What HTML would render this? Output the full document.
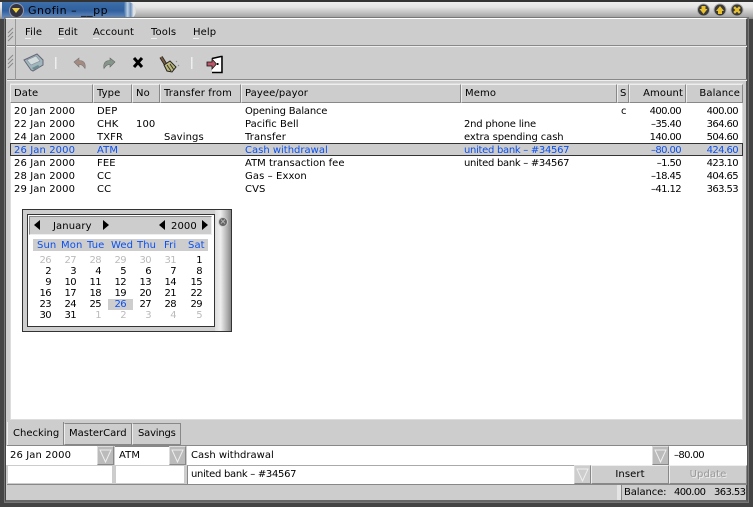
<!DOCTYPE html>
<html><head><meta charset="utf-8"><style>
*{box-sizing:border-box;margin:0;padding:0}
html,body{width:753px;height:507px;overflow:hidden;background:#444}
body{position:relative;font:10px/13px "DejaVu Sans",sans-serif;color:#000;letter-spacing:.1px}
.a{position:absolute;white-space:nowrap}
.r{text-align:right}
.c{text-align:center}
.h{position:absolute;top:84px;height:19px;background:#cdcdcd;border:1px solid;border-color:#eee #888 #888 #eee;line-height:18px;padding:0 3px;white-space:nowrap}
.t{position:absolute;height:13px;line-height:13px;white-space:nowrap;margin-top:1px}
.d{margin:-1px 0 0 -1px}
.b{color:#0a50f0}
.n{letter-spacing:-.6px}
.f{position:absolute;background:#fff;line-height:19px;padding-left:3px;white-space:nowrap}
.dd{position:absolute;width:17px;height:19px;background:#bbb;border:1px solid;border-color:#ddd #888 #888 #ddd}
.m{position:absolute;top:26px;line-height:13px}
.g{color:#bbb}
.tri{position:absolute;width:0;height:0;top:220px;border:5px solid transparent}
.u{position:absolute;top:38px;width:6px;height:1px;background:#eee}
</style></head><body>
<!-- title -->
<div class="a" style="left:0;top:0;width:753px;height:19px;background:linear-gradient(#eee,#e4e4e4 30%,#a8a8a8 85%,#888);border-top:2px solid #333"></div>
<div class="a" style="left:2px;top:2px;width:122px;height:17px;background:linear-gradient(#3f6fa8,#2f5f9e 50%,#6f92c2)"></div>
<div class="a" style="left:124px;top:2px;width:12px;height:17px;background:linear-gradient(90deg,#3f6fa8,#bcd0e4 30%,#6a8db8 55%,#e4e8ec 80%,#d8d8d8);border-radius:0 8px 8px 0"></div>
<div class="a" style="left:9px;top:3px;width:15px;height:15px;border-radius:50%;background:#334;border:1px solid #99a"></div>
<div class="a" style="left:12px;top:8px;width:0;height:0;border:4.500px solid transparent;border-top:5px solid #f0d040;border-bottom:0"></div>
<div class="a" style="left:28px;top:3px;font-size:11px;line-height:15px;letter-spacing:.5px;color:#000">Gnofin – __pp</div>
<svg class="a" style="left:696px;top:3px" width="52" height="15" viewBox="0 0 52 15">
<g stroke="#aaa"><circle cx="7.500" cy="7" r="6" fill="#3a3a3a"/><circle cx="24" cy="7" r="6" fill="#3a3a3a"/><circle cx="41" cy="7" r="6" fill="#3a3a3a"/></g>
<path d="M5.500 3h4v3h2l-4 5-4-5h2z" fill="#e8c030"/>
<path d="M22 11h4V8h2l-4-5-4 5h2z" fill="#e8c030"/>
<path d="M38 5l1-1 2 2 2-2 1 1-2 2 2 2-1 1-2-2-2 2-1-1 2-2z" fill="#e8c030" stroke="#e8c030"/>
</svg>
<!-- window -->
<div class="a" style="left:5px;top:18px;width:743px;height:484px;background:#cdcdcd;border:1px solid #fff;border-right:2px solid #555;border-bottom:2px solid #666;border-left:1px solid #444;outline:1px solid #777"></div>
<div class="a" style="left:7px;top:45px;width:740px;height:2px;background:linear-gradient(#888 50%,#eee 50%)"></div>
<div class="a" style="left:7px;top:79px;width:740px;height:2px;background:linear-gradient(#888 50%,#eee 50%)"></div>
<div class="a" style="left:15px;top:19px;width:1px;height:61px;background:#999"></div>
<svg class="a" style="left:7px;top:24px" width="7" height="50" viewBox="0 0 7 50" stroke="#888" fill="none"><path d="M1 9l5-5M1 13l5-5M1 17l5-5M1 44l5-5M1 40l5-5M1 36l5-5"/></svg>
<div class="m" style="left:25px">File</div>
<div class="m" style="left:58px">Edit</div>
<div class="m" style="left:93px">Account</div>
<div class="m" style="left:151px">Tools</div>
<div class="m" style="left:193px">Help</div>
<div class="u" style="left:25px"></div><div class="u" style="left:58px"></div><div class="u" style="left:93px"></div><div class="u" style="left:151px"></div><div class="u" style="left:193px"></div>
<!-- toolbar -->
<svg class="a" style="left:20px;top:50px" width="210" height="26" viewBox="0 0 210 26">
<path d="M4 10L17 4l6 6v5l-10 6-2-1z" fill="#9fb6bc" stroke="#667" stroke-width="1"/>
<path d="M7 10l9-4 4 5-9 4z" fill="#d2dcdc" stroke="#889" stroke-width=".6"/><path d="M12 18l6-3 2 2-6 3z" fill="#6f8a90"/>
<rect x="35" y="7" width="1.5" height="12" fill="#eee"/>
<path d="M54 12l5-4v2.500c5 0 7 3 6 8-2-3-3-4-6-4v2.500z" fill="#a58a80" stroke="#777" stroke-width=".6"/>
<path d="M95 12l-5-4v2.500c-5 0-7 3-6 8 2-3 3-4 6-4v2.500z" fill="#84968a" stroke="#666" stroke-width=".6"/>
<path d="M114 8l8 9M122 8l-8 9" stroke="#000" stroke-width="3"/>
<path d="M141 7l5 8" stroke="#222" stroke-width="3.500"/><path d="M141 7l5 8" stroke="#7a5a40" stroke-width="1.800"/>
<path d="M144 15l6-4 6 6-4 5-5-1z" fill="#bdb878" stroke="#222" stroke-width="1"/>
<path d="M147 15l4 6M150 14l4 6" stroke="#333" stroke-width="1"/><path d="M156 11l1 1M158 15l1 1" stroke="#889" stroke-width="1"/>
<rect x="171" y="7" width="1.5" height="12" fill="#eee"/>
<path d="M192 9l9-2v15h-9z" fill="#fff"/>
<path d="M192 8.500l9-2h1v16h-10" fill="none" stroke="#000" stroke-width="1.500"/>
<rect x="197" y="13" width="1.500" height="2" fill="#000"/>
<path d="M187 12h5V9l4.500 5-4.500 5v-3h-5z" fill="#b85868" stroke="#111" stroke-width=".8"/>
</svg>
<!-- table -->
<div class="a" style="left:8px;top:81px;width:737px;height:341px;background:#fff;border:2px solid #cdcdcd;box-shadow:inset 0 0 0 1px #ddd"></div>
<div class="h" style="left:10px;width:83px">Date</div>
<div class="h" style="left:93px;width:39px">Type</div>
<div class="h" style="left:132px;width:28px">No</div>
<div class="h" style="left:160px;width:81px">Transfer from</div>
<div class="h" style="left:241px;width:220px">Payee/payor</div>
<div class="h" style="left:461px;width:156px">Memo</div>
<div class="h" style="left:617px;width:12px;padding:0 2px">S</div>
<div class="h r" style="left:629px;width:57px;padding-right:2px">Amount</div>
<div class="h r" style="left:686px;width:57px;padding-right:2px">Balance</div>
<div class="a" style="left:10px;top:143px;width:733px;height:13px;background:#cdcdcd;border:1px solid #333"></div>
<!-- rows -->
<div class="t" style="left:14px;top:104px">20 Jan 2000</div><div class="t" style="left:97px;top:104px">DEP</div><div class="t" style="left:245px;top:104px;letter-spacing:-.2px">Opening Balance</div><div class="t" style="left:621px;top:104px">c</div><div class="t r n" style="right:72px;top:104px">400.00</div><div class="t r n" style="right:15px;top:104px">400.00</div>
<div class="t" style="left:14px;top:117px">22 Jan 2000</div><div class="t" style="left:97px;top:117px">CHK</div><div class="t" style="left:136px;top:117px">100</div><div class="t" style="left:245px;top:117px;letter-spacing:0">Pacific Bell</div><div class="t" style="left:464px;top:117px;letter-spacing:-.2px">2nd phone line</div><div class="t r n" style="right:72px;top:117px">–35.40</div><div class="t r n" style="right:15px;top:117px">364.60</div>
<div class="t" style="left:14px;top:130px">24 Jan 2000</div><div class="t" style="left:97px;top:130px">TXFR</div><div class="t" style="left:164px;top:130px">Savings</div><div class="t" style="left:245px;top:130px">Transfer</div><div class="t" style="left:464px;top:130px;letter-spacing:-.1px">extra spending cash</div><div class="t r n" style="right:72px;top:130px">140.00</div><div class="t r n" style="right:15px;top:130px">504.60</div>
<div class="t b" style="left:14px;top:143px">26 Jan 2000</div><div class="t b" style="left:97px;top:143px">ATM</div><div class="t b" style="left:245px;top:143px;letter-spacing:0">Cash withdrawal</div><div class="t b" style="left:464px;top:143px;letter-spacing:-.3px">united bank – #34567</div><div class="t r n b" style="right:72px;top:143px">–80.00</div><div class="t r n b" style="right:15px;top:143px">424.60</div>
<div class="t" style="left:14px;top:156px">26 Jan 2000</div><div class="t" style="left:97px;top:156px">FEE</div><div class="t" style="left:245px;top:156px;letter-spacing:0">ATM transaction fee</div><div class="t" style="left:464px;top:156px;letter-spacing:-.3px">united bank – #34567</div><div class="t r n" style="right:72px;top:156px">–1.50</div><div class="t r n" style="right:15px;top:156px">423.10</div>
<div class="t" style="left:14px;top:169px">28 Jan 2000</div><div class="t" style="left:97px;top:169px">CC</div><div class="t" style="left:245px;top:169px">Gas – Exxon</div><div class="t r n" style="right:72px;top:169px">–18.45</div><div class="t r n" style="right:15px;top:169px">404.65</div>
<div class="t" style="left:14px;top:182px">29 Jan 2000</div><div class="t" style="left:97px;top:182px">CC</div><div class="t" style="left:245px;top:182px">CVS</div><div class="t r n" style="right:72px;top:182px">–41.12</div><div class="t r n" style="right:15px;top:182px">363.53</div>
<!-- calendar -->
<div class="a" style="left:22px;top:209px;width:210px;height:123px;background:#cfcfcf;border:1px solid #333"></div>
<div class="a" style="left:215px;top:210px;width:16px;height:121px;background:linear-gradient(90deg,#ddd,#eee 35%,#aaa 80%,#888)"></div>
<div class="a" style="left:27px;top:214px;width:188px;height:113px;background:#fff;border:1px solid #333"></div>
<div class="a" style="left:29px;top:216px;width:183px;height:19px;background:#cdcdcd;border:1px solid;border-color:#888 #eee #eee #888"></div>
<div class="tri" style="left:34px;border-right:6px solid #000;border-left:0"></div>
<div class="tri" style="left:103px;border-left:6px solid #000;border-right:0"></div>
<div class="tri" style="left:159px;border-right:6px solid #000;border-left:0"></div>
<div class="tri" style="left:202px;border-left:6px solid #000;border-right:0"></div>
<div class="t" style="left:53px;top:219px">January</div><div class="t" style="left:171px;top:219px">2000</div>
<div class="a" style="left:218px;top:217px;width:10px;height:10px;border-radius:50%;background:#666;border:1px solid #ccc;color:#ccc;font-size:8px;line-height:8px;text-align:center">×</div>
<div class="a" style="left:33px;top:239px;width:175px;height:12px;background:#cdcdcd"></div>
<div class="t b" style="left:37px;top:238px">Sun</div><div class="t b" style="left:61px;top:238px">Mon</div><div class="t b" style="left:87px;top:238px">Tue</div><div class="t b" style="left:111px;top:238px">Wed</div><div class="t b" style="left:137px;top:238px">Thu</div><div class="t b" style="left:164px;top:238px">Fri</div><div class="t b" style="left:188px;top:238px">Sat</div>
<div class="a" style="left:108px;top:299px;width:25px;height:11px;background:#cdcdcd"></div>
<div class="t d n g r" style="left:30px;width:22px;top:255px">26</div><div class="t d n g r" style="left:55px;width:22px;top:255px">27</div><div class="t d n g r" style="left:80px;width:22px;top:255px">28</div><div class="t d n g r" style="left:105px;width:22px;top:255px">29</div><div class="t d n g r" style="left:130px;width:22px;top:255px">30</div><div class="t d n g r" style="left:155px;width:22px;top:255px">31</div><div class="t d n r" style="left:181px;width:22px;top:255px">1</div>
<div class="t d n r" style="left:30px;width:22px;top:266px">2</div><div class="t d n r" style="left:55px;width:22px;top:266px">3</div><div class="t d n r" style="left:80px;width:22px;top:266px">4</div><div class="t d n r" style="left:105px;width:22px;top:266px">5</div><div class="t d n r" style="left:130px;width:22px;top:266px">6</div><div class="t d n r" style="left:155px;width:22px;top:266px">7</div><div class="t d n r" style="left:181px;width:22px;top:266px">8</div>
<div class="t d n r" style="left:30px;width:22px;top:277px">9</div><div class="t d n r" style="left:55px;width:22px;top:277px">10</div><div class="t d n r" style="left:80px;width:22px;top:277px">11</div><div class="t d n r" style="left:105px;width:22px;top:277px">12</div><div class="t d n r" style="left:130px;width:22px;top:277px">13</div><div class="t d n r" style="left:155px;width:22px;top:277px">14</div><div class="t d n r" style="left:181px;width:22px;top:277px">15</div>
<div class="t d n r" style="left:30px;width:22px;top:288px">16</div><div class="t d n r" style="left:55px;width:22px;top:288px">17</div><div class="t d n r" style="left:80px;width:22px;top:288px">18</div><div class="t d n r" style="left:105px;width:22px;top:288px">19</div><div class="t d n r" style="left:130px;width:22px;top:288px">20</div><div class="t d n r" style="left:155px;width:22px;top:288px">21</div><div class="t d n r" style="left:181px;width:22px;top:288px">22</div>
<div class="t d n r" style="left:30px;width:22px;top:299px">23</div><div class="t d n r" style="left:55px;width:22px;top:299px">24</div><div class="t d n r" style="left:80px;width:22px;top:299px">25</div><div class="t d n r b" style="left:105px;width:22px;top:299px">26</div><div class="t d n r" style="left:130px;width:22px;top:299px">27</div><div class="t d n r" style="left:155px;width:22px;top:299px">28</div><div class="t d n r" style="left:181px;width:22px;top:299px">29</div>
<div class="t d n r" style="left:30px;width:22px;top:310px">30</div><div class="t d n r" style="left:55px;width:22px;top:310px">31</div><div class="t d n g r" style="left:80px;width:22px;top:310px">1</div><div class="t d n g r" style="left:105px;width:22px;top:310px">2</div><div class="t d n g r" style="left:130px;width:22px;top:310px">3</div><div class="t d n g r" style="left:155px;width:22px;top:310px">4</div><div class="t d n g r" style="left:181px;width:22px;top:310px">5</div>
<!-- tabs -->
<div class="a" style="left:7px;top:422px;width:57px;height:24px;background:#cdcdcd;border-left:1px solid #eee;border-right:1px solid #888;line-height:24px;padding-left:5px;letter-spacing:0">Checking</div>
<div class="a" style="left:64px;top:423px;width:68px;height:22px;background:#cdcdcd;border:1px solid #888;border-left-color:#eee;line-height:19px;padding-left:4px;letter-spacing:0">MasterCard</div>
<div class="a" style="left:132px;top:423px;width:49px;height:22px;background:#cdcdcd;border:1px solid #888;border-left-color:#eee;line-height:19px;padding-left:5px;letter-spacing:-.2px">Savings</div>
<div class="a" style="left:7px;top:445px;width:740px;height:1px;background:#888"></div>
<!-- form -->
<div class="f" style="left:6px;top:446px;width:91px;height:19px;padding-left:4px">26 Jan 2000</div>
<div class="f" style="left:115px;top:446px;width:54px;height:19px;padding-left:4px;border-top:1px solid #888;line-height:18px">ATM</div>
<div class="f" style="left:187px;top:446px;width:465px;height:19px;padding-left:4px;letter-spacing:0">Cash withdrawal</div>
<div class="f n" style="left:669px;top:446px;width:78px;height:19px;padding-left:5px">–80.00</div>
<div class="f" style="left:7px;top:465px;width:106px;height:19px;border:1px solid #ccc"></div>
<div class="f" style="left:115px;top:465px;width:70px;height:19px;border:1px solid #ccc"></div>
<div class="f" style="left:187px;top:465px;width:387px;height:19px;padding-left:3px;letter-spacing:-.3px;border-left:1px solid #888;border-top:1px solid #aaa;line-height:18px">united bank – #34567</div>
<div class="dd" style="left:97px;top:446px"></div><div class="dd" style="left:169px;top:446px"></div><div class="dd" style="left:652px;top:446px"></div><div class="dd" style="left:574px;top:465px;background:#cdcdcd"></div>
<svg class="a" style="left:97px;top:446px" width="580" height="40" fill="none" stroke-width="1"><path d="M3 4h11L8.500 16z" stroke="#eee"/><path d="M75 4h11L80.500 16z" stroke="#eee"/><path d="M558 4h11L563.500 16z" stroke="#eee"/><path d="M480 23h11L485.500 35z" stroke="#eee"/></svg>
<div class="a c" style="left:591px;top:465px;width:78px;height:19px;background:#cdcdcd;border:1px solid;border-color:#eee #888 #888 #eee;line-height:18px">Insert</div>
<div class="a c" style="left:669px;top:465px;width:78px;height:19px;background:#cdcdcd;border:1px solid;border-color:#eee #888 #888 #eee;line-height:18px;color:#999;text-shadow:1px 1px 0 #eee">Update</div>
<!-- status -->
<div class="a" style="left:7px;top:484px;width:740px;height:1px;background:#888"></div>
<div class="a" style="left:617px;top:485px;width:5px;height:15px;background:#e4e4e4;border-right:1px solid #888"></div>
<div class="t" style="left:624px;top:485px;letter-spacing:-.1px">Balance:</div><div class="t n" style="left:674px;top:485px">400.00</div><div class="t n" style="left:714px;top:485px">363.53</div>
</body></html>
